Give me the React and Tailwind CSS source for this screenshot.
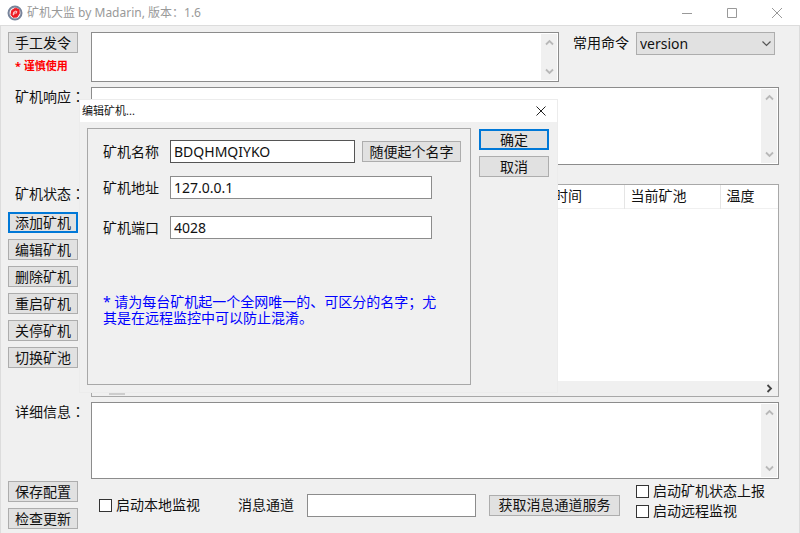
import React, { useState } from "react";

const SIDE_BUTTONS = ["添加矿机", "编辑矿机", "删除矿机", "重启矿机", "关停矿机", "切换矿池"];

const Chevron = ({ d, className, strokeWidth = 1.8 }) => (
  <svg viewBox="0 0 9 9" className={`w-[9px] h-[9px] ${className}`} fill="none" stroke="currentColor" strokeWidth={strokeWidth}>
    <path d={d} />
  </svg>
);

const Logo = () => (
  <svg viewBox="0 0 16 16" className="w-4 h-4">
    <circle cx="8" cy="8" r="6.5" fill="#f6eef0" stroke="#77849b" strokeWidth="2" />
    <path d="M4 9.6 L4.8 5.4 L8.4 3.2 L12 4.6 L12.2 8.6 L10 12 L6 12.2 Z" fill="#ee1c24" stroke="#ee1c24" strokeLinejoin="round" />
    <path d="M5.6 9.8 L6.2 7 L8.8 5.4 L10.4 6.4 L9.8 8.4 L7.6 8.6 L6.8 10.4 Z" fill="#fbc4c6" />
    <path d="M7.4 7.6 L9 6.6 L8.8 7.8 Z" fill="#ee1c24" />
  </svg>
);

const WinButton = ({ children, primary, className = "" }) => (
  <button
    className={`h-[21px] shrink-0 flex items-center justify-center bg-[#e1e1e1] whitespace-nowrap leading-4 ${
      primary ? "border-2 border-[#0078d7]" : "border border-[#adadad]"
    } ${className}`}>
    {children}
  </button>
);

// Row caption with a centred full-width colon
const Caption = ({ htmlFor, children }) => (
  <label htmlFor={htmlFor} className="block pl-[7px] whitespace-nowrap leading-[18px]">
    {children}
    <span className="font-['Noto_Sans_CJK_TC',sans-serif]" lang="zh-TW">：</span>
  </label>
);

const ScrollBox = ({ id, label, className }) => (
  <div className={`flex flex-1 min-w-0 bg-white border border-[#8c8c8c] ${className}`}>
    <textarea id={id} aria-label={label} className="flex-1 min-w-0 resize-none px-1 focus:outline-none" />
    <div className="w-4 my-px mr-px bg-[#f0f0f0] text-[#b8b8b8] flex flex-col items-center justify-between py-1">
      <Chevron d="M1 6.5 L4.5 3 L8 6.5" />
      <Chevron d="M1 2.5 L4.5 6 L8 2.5" />
    </div>
  </div>
);

const Check = ({ id, children }) => (
  <div className="flex items-center gap-1 h-5 shrink-0">
    <input id={id} type="checkbox" className="appearance-none w-[13px] h-[13px] bg-white border border-[#333] checked:bg-[#0078d7]" />
    <label htmlFor={id} className="whitespace-nowrap">{children}</label>
  </div>
);

const TitleBar = () => (
  <header className="h-[25px] bg-white flex items-center justify-between pl-[7px] pr-[18px] text-[#999]">
    <div className="flex items-center gap-1 text-xs">
      <Logo />
      <h1>矿机大监 by Madarin, 版本：1.6</h1>
    </div>
    <div className="flex items-center gap-[35px]">
      <button aria-label="最小化">
        <svg viewBox="0 0 10 10" className="w-[10px] h-[10px]" stroke="currentColor"><path d="M0 5.5 H10" /></svg>
      </button>
      <button aria-label="最大化">
        <svg viewBox="0 0 10 10" className="w-[10px] h-[10px]" fill="none" stroke="currentColor"><path d="M.5 .5 H9.5 V9.5 H.5 Z" /></svg>
      </button>
      <button aria-label="关闭">
        <svg viewBox="0 0 10 10" className="w-[10px] h-[10px]" stroke="currentColor"><path d="M0 0 L10 10 M10 0 L0 10" /></svg>
      </button>
    </div>
  </header>
);

const EditDialog = () => {
  const [name, setName] = useState("BDQHMQIYKO");
  const [address, setAddress] = useState("127.0.0.1");
  const [port, setPort] = useState("4028");

  return (
    <div role="dialog" aria-labelledby="dialog-title" className="absolute left-[79px] top-[99px] w-[479px] bg-[#f0f0f0] border border-[#ececec]">
      <div className="h-[22px] bg-white flex items-center justify-between pl-[2px] pr-[11px]">
        <h2 id="dialog-title" className="text-[11px]">编辑矿机...</h2>
        <button aria-label="关闭">
          <svg viewBox="0 0 10 10" className="w-[10px] h-[10px]" stroke="#222"><path d="M.5 .5 L9.5 9.5 M9.5 .5 L.5 9.5" /></svg>
        </button>
      </div>
      <div className="flex gap-2 pt-[6px] pb-[7px] pl-[7px] pr-2">
        <div className="flex-1 min-w-0 h-[257px] border border-[#a8a8a8] pl-[15px] pt-[11px] pr-[9px]">
          <div className="flex items-center h-[23px]">
            <label htmlFor="miner-name" className="w-[67px] shrink-0">矿机名称</label>
            <input
              id="miner-name"
              value={name}
              onChange={(e) => setName(e.target.value)}
              className="flex-1 min-w-0 h-[23px] bg-white border border-[#555] px-[3px] mr-[7px] focus:outline-none"
            />
            <WinButton className="w-[99px]">随便起个名字</WinButton>
          </div>
          <div className="flex items-center h-[23px] mt-[13px]">
            <label htmlFor="miner-address" className="w-[67px] shrink-0">矿机地址</label>
            <input
              id="miner-address"
              value={address}
              onChange={(e) => setAddress(e.target.value)}
              className="w-[262px] h-[23px] bg-white border border-[#8c8c8c] px-[3px] focus:outline-none"
            />
          </div>
          <div className="flex items-center h-[23px] mt-[17px]">
            <label htmlFor="miner-port" className="w-[67px] shrink-0">矿机端口</label>
            <input
              id="miner-port"
              value={port}
              onChange={(e) => setPort(e.target.value)}
              className="w-[262px] h-[23px] bg-white border border-[#8c8c8c] px-[3px] focus:outline-none"
            />
          </div>
          <p className="mt-[55px] w-[344px] leading-4 text-[#0000ff]">
            * 请为每台矿机起一个全网唯一的、可区分的名字；尤其是在远程监控中可以防止混淆。
          </p>
        </div>
        <div className="w-[70px] shrink-0 flex flex-col gap-[6px] pt-px">
          <WinButton primary>确定</WinButton>
          <WinButton>取消</WinButton>
        </div>
      </div>
    </div>
  );
};

const App = () => {
  return (
    <div className="relative min-h-screen bg-[#f0f0f0] text-[#111] text-sm font-['Noto_Sans','Noto_Sans_CJK_SC',sans-serif]" lang="zh-CN">
      <TitleBar />
      <main className="border-x border-t border-[#dcdcdc] pl-[7px] pr-5 pt-[6px] pb-1">
        <div className="flex gap-[13px]">
          <div className="w-[70px] shrink-0">
            <WinButton className="w-full">手工发令</WinButton>
            <p className="pl-[7px] mt-[5px] text-[11px] leading-4 font-bold text-[#ff0000] whitespace-nowrap">* 谨慎使用</p>
          </div>
          <ScrollBox id="command" label="手工发令" className="h-[50px]" />
          <div className="flex items-start ml-px mr-1">
            <label htmlFor="common" className="mr-[7px] leading-[22px]">常用命令</label>
            <div className="relative">
              <select id="common" className="appearance-none block w-[139px] h-[23px] bg-[#e1e1e1] border border-[#adadad] pl-[3px] focus:outline-none">
                <option>version</option>
              </select>
              <Chevron d="M.5 2.5 L4.5 6.5 L8.5 2.5" strokeWidth={1.2} className="absolute right-1 top-[7px] text-[#555] pointer-events-none" />
            </div>
          </div>
        </div>

        <div className="flex gap-[13px] mt-[5px]">
          <div className="w-[70px] shrink-0">
            <Caption htmlFor="response">矿机响应</Caption>
          </div>
          <ScrollBox id="response" className="h-[78px]" />
        </div>

        <div className="flex gap-[13px] mt-[19px]">
          <div className="w-[70px] shrink-0 flex flex-col gap-[6px]">
            <div className="h-[22px]">
              <Caption>矿机状态</Caption>
            </div>
            {SIDE_BUTTONS.map((item, i) => (
              <WinButton key={item} primary={i === 0}>{item}</WinButton>
            ))}
          </div>
          <div className="flex-1 min-w-0 h-[213px] bg-white border border-[#a8a8a8] flex flex-col justify-between">
            <table className="w-full table-fixed text-left">
              <thead>
                <tr className="h-[23px] border-b border-[#f0f0f0]">
                  <th></th>
                  <th className="w-[76px] font-normal pl-[6px] border-r border-[#e5e5e5]">时间</th>
                  <th className="w-[96px] font-normal pl-[6px] border-r border-[#e5e5e5]">当前矿池</th>
                  <th className="w-[58px] font-normal pl-[6px]">温度</th>
                </tr>
              </thead>
            </table>
            <div className="h-[15px] bg-[#f0f0f0] flex items-center pr-1">
              <div className="w-4 ml-[17px] h-[13px] bg-[#cdcdcd]"></div>
              <Chevron d="M2.5 1 L6 4.5 L2.5 8" className="ml-auto text-[#444]" />
            </div>
          </div>
        </div>

        <div className="flex gap-[13px] mt-[5px]">
          <div className="w-[70px] shrink-0">
            <Caption htmlFor="details">详细信息</Caption>
          </div>
          <ScrollBox id="details" className="h-[77px]" />
        </div>

        <div className="flex mt-[2px]">
          <div className="w-[70px] shrink-0 flex flex-col gap-[6px]">
            <WinButton>保存配置</WinButton>
            <WinButton>检查更新</WinButton>
          </div>
          <div className="flex-1 min-w-0 flex items-center pl-[21px] pr-[14px]">
            <Check id="local">启动本地监视</Check>
            <label htmlFor="channel" className="ml-[38px] mr-[13px] whitespace-nowrap">消息通道</label>
            <input id="channel" className="flex-1 min-w-0 h-[23px] bg-white border border-[#8c8c8c] px-[3px] focus:outline-none" />
            <WinButton className="w-[131px] ml-[13px] mr-4">获取消息通道服务</WinButton>
            <div className="self-start">
              <Check id="report">启动矿机状态上报</Check>
              <Check id="remote">启动远程监视</Check>
            </div>
          </div>
        </div>
      </main>
      <EditDialog />
    </div>
  );
};

export default App;
